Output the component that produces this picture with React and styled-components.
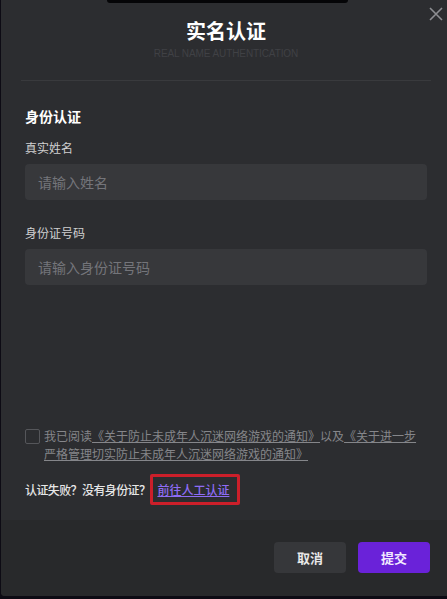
import React from 'react';
import styled, { createGlobalStyle } from 'styled-components';

const GlobalStyle = createGlobalStyle`
  html, body {
    margin: 0;
    padding: 0;
    background: #0d0b14;
    font-family: "Microsoft YaHei", "Noto Sans CJK SC", "Noto Sans", sans-serif;
  }
  *, *::before, *::after {
    box-sizing: border-box;
  }
`;

const Screen = styled.div`
  width: 447px;
  height: 599px;
  overflow: hidden;
  background: #0d0b14;
`;

const Dialog = styled.div`
  position: relative;
  width: 460px;
  height: 596px;
  margin-left: 1px;
  background: #2c2d30;
  border-radius: 0 0 4px 4px;
  display: flex;
  flex-direction: column;
  overflow: hidden;
`;

const TopNotch = styled.div`
  position: absolute;
  top: 0;
  left: 106px;
  width: 241px;
  height: 3px;
  background: #050507;
  border-radius: 0 0 4px 4px;
`;

const CloseButton = styled.button`
  position: absolute;
  top: 4px;
  left: 424px;
  width: 22px;
  height: 20px;
  padding: 0;
  border: 0;
  background: none;
  display: flex;
  align-items: center;
  justify-content: center;
  cursor: pointer;
`;

const Header = styled.div`
  flex: none;
  display: flex;
  flex-direction: column;
  align-items: center;
  padding-top: 17px;
  margin: 0 16px 0 20px;
  width: 410px;
  height: 81px;
  border-bottom: 1px solid #393a3d;
`;

const Title = styled.h1`
  margin: 0;
  font-size: 20px;
  line-height: 28px;
  font-weight: 700;
  color: #ffffff;
`;

const Subtitle = styled.div`
  margin-top: 3px;
  font-family: "Liberation Sans", Arial, sans-serif;
  font-size: 10px;
  line-height: 12px;
  color: #404145;
  letter-spacing: -0.1px;
`;

const Body = styled.div`
  flex: 1;
  display: flex;
  flex-direction: column;
  padding: 25px 0 0 24px;
  width: 426px;
`;

const SectionTitle = styled.div`
  font-size: 14px;
  line-height: 20px;
  font-weight: 700;
  color: #ffffff;
`;

const FieldLabel = styled.div`
  margin-top: ${(p) => p.$top}px;
  font-size: 12px;
  line-height: 20px;
  color: #d0d0d0;
`;

const Input = styled.input`
  margin-top: 6px;
  width: 402px;
  height: 36px;
  padding: 0 13px;
  border: 0;
  border-radius: 4px;
  background: #37383b;
  color: #ddd;
  font-family: inherit;
  font-size: 14px;
  outline: none;

  &::placeholder {
    color: #74757a;
  }
`;

const Agreement = styled.label`
  margin-top: auto;
  display: flex;
  align-items: flex-start;
  gap: 4px;
  width: 400px;
  font-size: 12px;
  line-height: 18px;
  color: #85868a;
`;

const CheckBox = styled.span`
  flex: none;
  margin-top: 2px;
  width: 15px;
  height: 15px;
  border: 1px solid #55565a;
  border-radius: 2px;
`;

const AgreementText = styled.span`
  display: flex;
  flex-direction: column;
`;

const DocLink = styled.a`
  color: #85868a;
  text-decoration: underline;
`;

const Fallback = styled.div`
  margin: 11px 0 15px;
  display: flex;
  align-items: center;
  font-size: 12px;
  line-height: 19px;
  color: #e6e6e6;
  font-weight: 500;
  letter-spacing: -0.6px;
`;

const Highlight = styled.span`
  padding: 3px 8px 3px 4px;
  border: 3px solid #cc1f2a;
  border-radius: 2px;
  letter-spacing: 0;
`;

const ManualLink = styled.a`
  color: #8e6cf5;
  text-decoration: underline;
`;

const Footer = styled.div`
  flex: none;
  height: 76px;
  background: #28292b;
  display: flex;
  align-items: flex-start;
  padding: 22px 0 0 273px;
  gap: 12px;
`;

const Button = styled.button`
  width: 72px;
  height: 31px;
  border: 0;
  border-radius: 4px;
  background: ${(p) => (p.$primary ? '#6a22d9' : '#36373a')};
  color: ${(p) => (p.$primary ? '#f1eaff' : '#e8e8e8')};
  font-family: inherit;
  font-size: 13px;
  font-weight: 700;
  cursor: pointer;
`;

export default function App() {
  return (
    <Screen>
      <GlobalStyle />
      <Dialog>
        <TopNotch />
        <CloseButton aria-label="关闭">
          <svg width="14" height="14" viewBox="0 0 14 14">
            <path d="M1 1L13 13M13 1L1 13" stroke="#8d8e92" strokeWidth="1.6" />
          </svg>
        </CloseButton>
        <Header>
          <Title>实名认证</Title>
          <Subtitle>REAL NAME AUTHENTICATION</Subtitle>
        </Header>
        <Body>
          <SectionTitle>身份认证</SectionTitle>
          <FieldLabel $top={12}>真实姓名</FieldLabel>
          <Input placeholder="请输入姓名" />
          <FieldLabel $top={23}>身份证号码</FieldLabel>
          <Input placeholder="请输入身份证号码" />
          <Agreement>
            <CheckBox />
            <AgreementText>
              <span>
                我已阅读<DocLink>《关于防止未成年人沉迷网络游戏的通知》</DocLink>以及<DocLink>《关于进一步</DocLink>
              </span>
              <span>
                <DocLink>严格管理切实防止未成年人沉迷网络游戏的通知》</DocLink>
              </span>
            </AgreementText>
          </Agreement>
          <Fallback>
            认证失败？没有身份证？
            <Highlight>
              <ManualLink>前往人工认证</ManualLink>
            </Highlight>
          </Fallback>
        </Body>
        <Footer>
          <Button>取消</Button>
          <Button $primary>提交</Button>
        </Footer>
      </Dialog>
    </Screen>
  );
}
